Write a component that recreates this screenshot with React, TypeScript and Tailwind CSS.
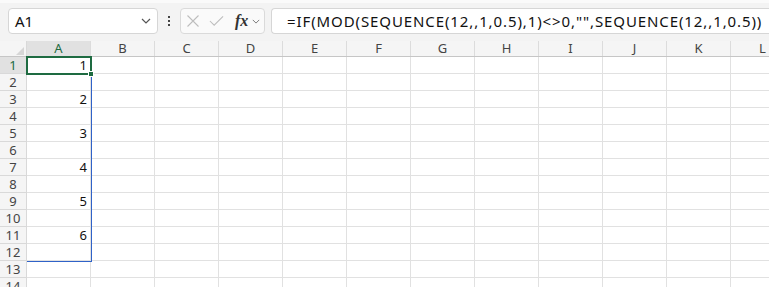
import React from "react";

const cols = ["A", "B", "C", "D", "E", "F", "G", "H", "I", "J", "K", "L"];
const rows = Array.from({ length: 14 }, (_, i) => i + 1);

// values in column A (spilled result)
const values: Record<number, string> = { 1: "1", 3: "2", 5: "3", 7: "4", 9: "5", 11: "6" };

const Chevron = ({ className }: { className?: string }) => (
  <svg viewBox="0 0 10 6" className={className} fill="none" stroke="currentColor" strokeWidth="1.2">
    <path d="M1 1l4 4 4-4" />
  </svg>
);

export default function App() {
  return (
    <div className="w-[769px] h-[287px] overflow-hidden bg-white font-['Noto_Sans',sans-serif] text-[#222]">
      {/* toolbar with name box and formula bar */}
      <div className="h-[41px] bg-[#f3f3f3] border-t-[3px] border-[#fafafa] flex items-start pt-[5px] pl-[8px]">
        <div className="w-[150px] h-[26px] bg-white border border-[#d6d6d6] rounded-[4px] flex items-center pl-[6px] pr-[6px]">
          <span className="text-[15px] leading-none text-[#111]">A1</span>
          <Chevron className="ml-auto w-[10px] h-[6px] text-[#555]" />
        </div>
        <div className="w-[22px] h-[26px] flex flex-col items-center justify-center gap-[2px]">
          <div className="w-[2px] h-[2px] bg-[#444]" />
          <div className="w-[2px] h-[2px] bg-[#444]" />
          <div className="w-[2px] h-[2px] bg-[#444]" />
        </div>
        <div className="w-[85px] h-[26px] bg-[#fafafa] border border-[#dadada] rounded-[4px] flex items-center pl-[5px]">
          <svg viewBox="0 0 14 14" className="w-[14px] h-[14px] text-[#bdbdbd]" fill="none" stroke="currentColor" strokeWidth="1.1">
            <path d="M1.5 1.5l11 11M12.5 1.5l-11 11" />
          </svg>
          <svg viewBox="0 0 16 12" className="ml-[9px] w-[15px] h-[12px] text-[#bdbdbd]" fill="none" stroke="currentColor" strokeWidth="1.1">
            <path d="M1 6l4.5 4.5L15 1" />
          </svg>
          <span className="ml-[11px] font-['Liberation_Serif',serif] italic font-semibold text-[16px] leading-none text-[#333]">fx</span>
          <Chevron className="ml-[4px] w-[8px] h-[5px] text-[#777]" />
        </div>
        <div className="ml-[6px] flex-1 h-[26px] bg-white border border-[#d6d6d6] border-r-0 rounded-l-[4px] flex items-center pl-[15px]">
          <span className="text-[15px] leading-none tracking-[0.9px] text-[#111] whitespace-nowrap">
            =IF(MOD(SEQUENCE(12,,1,0.5),1)&lt;&gt;0,"",SEQUENCE(12,,1,0.5))
          </span>
        </div>
      </div>

      {/* grid */}
      <div className="relative">
        <div className="flex h-[16px] bg-[#f5f5f5] border-b border-[#c6c6c6]">
          <div className="w-[27px] shrink-0 border-r border-[#d9d9d9] relative">
            <svg viewBox="0 0 8 8" className="absolute right-[2px] bottom-[1px] w-[8px] h-[8px]">
              <path d="M8 0L8 8L0 8Z" fill="#d6d6d6" />
            </svg>
          </div>
          {cols.map((c) => (
            <div
              key={c}
              className={`w-[64px] shrink-0 border-r border-[#dcdcdc] flex items-center justify-center text-[13px] leading-none ${
                c === "A" ? "bg-[#e1e1e1] text-[#1e6b41]" : "text-[#444]"
              }`}
            >
              {c}
            </div>
          ))}
        </div>
        {rows.map((r) => (
          <div key={r} className="flex h-[17px]">
            <div
              className={`w-[27px] shrink-0 border-r border-b border-[#d9d9d9] flex items-center justify-center text-[13px] leading-none ${
                r === 1 ? "bg-[#e1e1e1] text-[#1e6b41]" : "bg-[#f5f5f5] text-[#444]"
              }`}
            >
              {r}
            </div>
            {cols.map((c) => (
              <div
                key={c}
                className="w-[64px] shrink-0 border-r border-b border-[#e1e1e1] flex items-center justify-end pr-[3px] text-[13px] leading-none text-[#111]"
              >
                {c === "A" ? values[r] ?? "" : ""}
              </div>
            ))}
          </div>
        ))}

        {/* spill range border A1:A12 */}
        <div className="absolute left-[27px] top-[16px] w-[65px] h-[205px] border-r border-b border-[#2f62c8] pointer-events-none" />
        {/* active cell */}
        <div className="absolute left-[26px] top-[15px] w-[66px] h-[19px] border-2 border-[#1e6b41] pointer-events-none" />
        <div className="absolute left-[88px] top-[30px] w-[6px] h-[6px] bg-[#1e6b41] border border-white pointer-events-none" />
      </div>
    </div>
  );
}
